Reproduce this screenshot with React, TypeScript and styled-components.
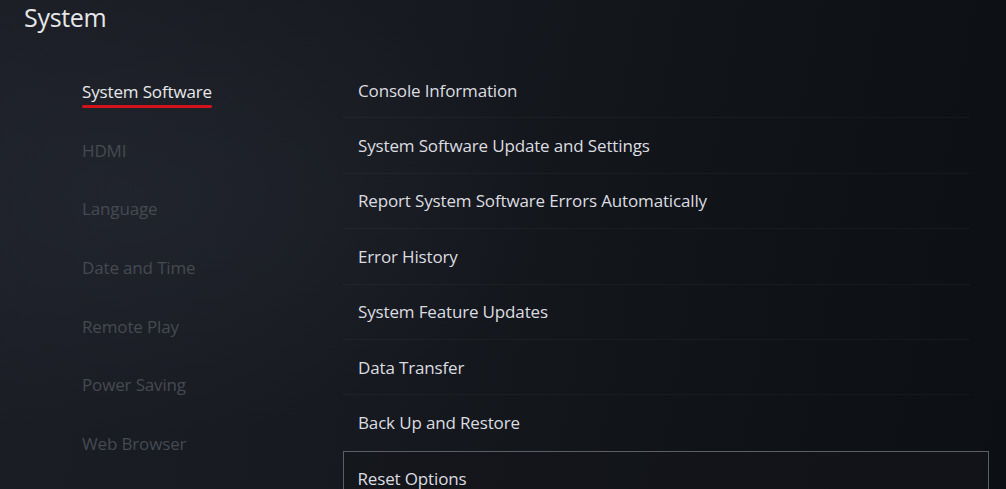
import styled, { createGlobalStyle } from "styled-components";

const GlobalStyle = createGlobalStyle`
  html, body {
    margin: 0;
    padding: 0;
    height: 100%;
    overflow: hidden;
    background: #0f1217;
  }
  #root {
    height: 100%;
  }
`;

const sideItems = [
  "System Software",
  "HDMI",
  "Language",
  "Date and Time",
  "Remote Play",
  "Power Saving",
  "Web Browser",
];

const options = [
  "Console Information",
  "System Software Update and Settings",
  "Report System Software Errors Automatically",
  "Error History",
  "System Feature Updates",
  "Data Transfer",
  "Back Up and Restore",
  "Reset Options",
];

export default function App() {
  return (
    <>
      <GlobalStyle />
      <Screen>
        <Title>System</Title>
        <Body>
          <SideMenu>
            {sideItems.map((item, i) => (
              <SideItem key={item}>
                <SideLabel active={i === 0}>{item}</SideLabel>
              </SideItem>
            ))}
          </SideMenu>
          <OptionList>
            {options.map((opt, i) => (
              <OptionRow key={opt} focused={i === options.length - 1} last={i >= options.length - 2}>
                {opt}
              </OptionRow>
            ))}
          </OptionList>
        </Body>
      </Screen>
    </>
  );
}

const Screen = styled.div`
  height: 100%;
  width: 100%;
  display: flex;
  flex-direction: column;
  font-family: "Open Sans", "Noto Sans", sans-serif;
  background:
    radial-gradient(ellipse 60% 70% at 12% 40%, rgba(40, 44, 54, 0.5), rgba(40, 44, 54, 0) 70%),
    linear-gradient(100deg, #1b1e25 0%, #171a20 35%, #101318 70%, #0c0f13 100%);
  overflow: hidden;
`;

const Title = styled.h1`
  margin: 0;
  padding: 0 0 0 24px;
  height: 59px;
  box-sizing: border-box;
  font-size: 25px;
  font-weight: 400;
  color: #e6e7e9;
  letter-spacing: -0.3px;
`;

const Body = styled.div`
  display: flex;
  flex: 1;
  min-height: 0;
`;

const SideMenu = styled.ul`
  list-style: none;
  margin: 0;
  padding: 3px 0 0 82px;
  width: 261px;
  flex-shrink: 0;
`;

const SideItem = styled.li`
  height: 58.7px;
  display: flex;
  align-items: center;
`;

const SideLabel = styled.span<{ active: boolean }>`
  position: relative;
  font-size: 17px;
  color: ${(p) => (p.active ? "#e8e9eb" : "#464a52")};
  letter-spacing: -0.15px;

  &::after {
    content: "";
    display: ${(p) => (p.active ? "block" : "none")};
    position: absolute;
    left: 0;
    right: 0;
    bottom: -5px;
    height: 3px;
    border-radius: 2px;
    background: #d3121b;
  }
`;

const OptionList = styled.ul`
  list-style: none;
  margin: 0;
  padding: 4px 0 0 0;
  width: 646px;
  flex-shrink: 0;
`;

const OptionRow = styled.li<{ focused: boolean; last: boolean }>`
  height: 55.4px;
  box-sizing: border-box;
  display: flex;
  align-items: center;
  font-size: 17px;
  color: #dcdde0;
  letter-spacing: -0.15px;
  border-bottom: 1px solid ${(p) => (p.last ? "transparent" : "rgba(255, 255, 255, 0.035)")};
  border: ${(p) => (p.focused ? "1.5px solid #5c5e63" : undefined)};
  border-bottom: ${(p) => (p.focused ? "none" : undefined)};
  margin: ${(p) => (p.focused ? "0" : "0 19px 0 0")};
  padding-left: ${(p) => (p.focused ? "13.5px" : "15px")};
  background: ${(p) => (p.focused ? "rgba(20, 22, 27, 0.6)" : "transparent")};
`;
